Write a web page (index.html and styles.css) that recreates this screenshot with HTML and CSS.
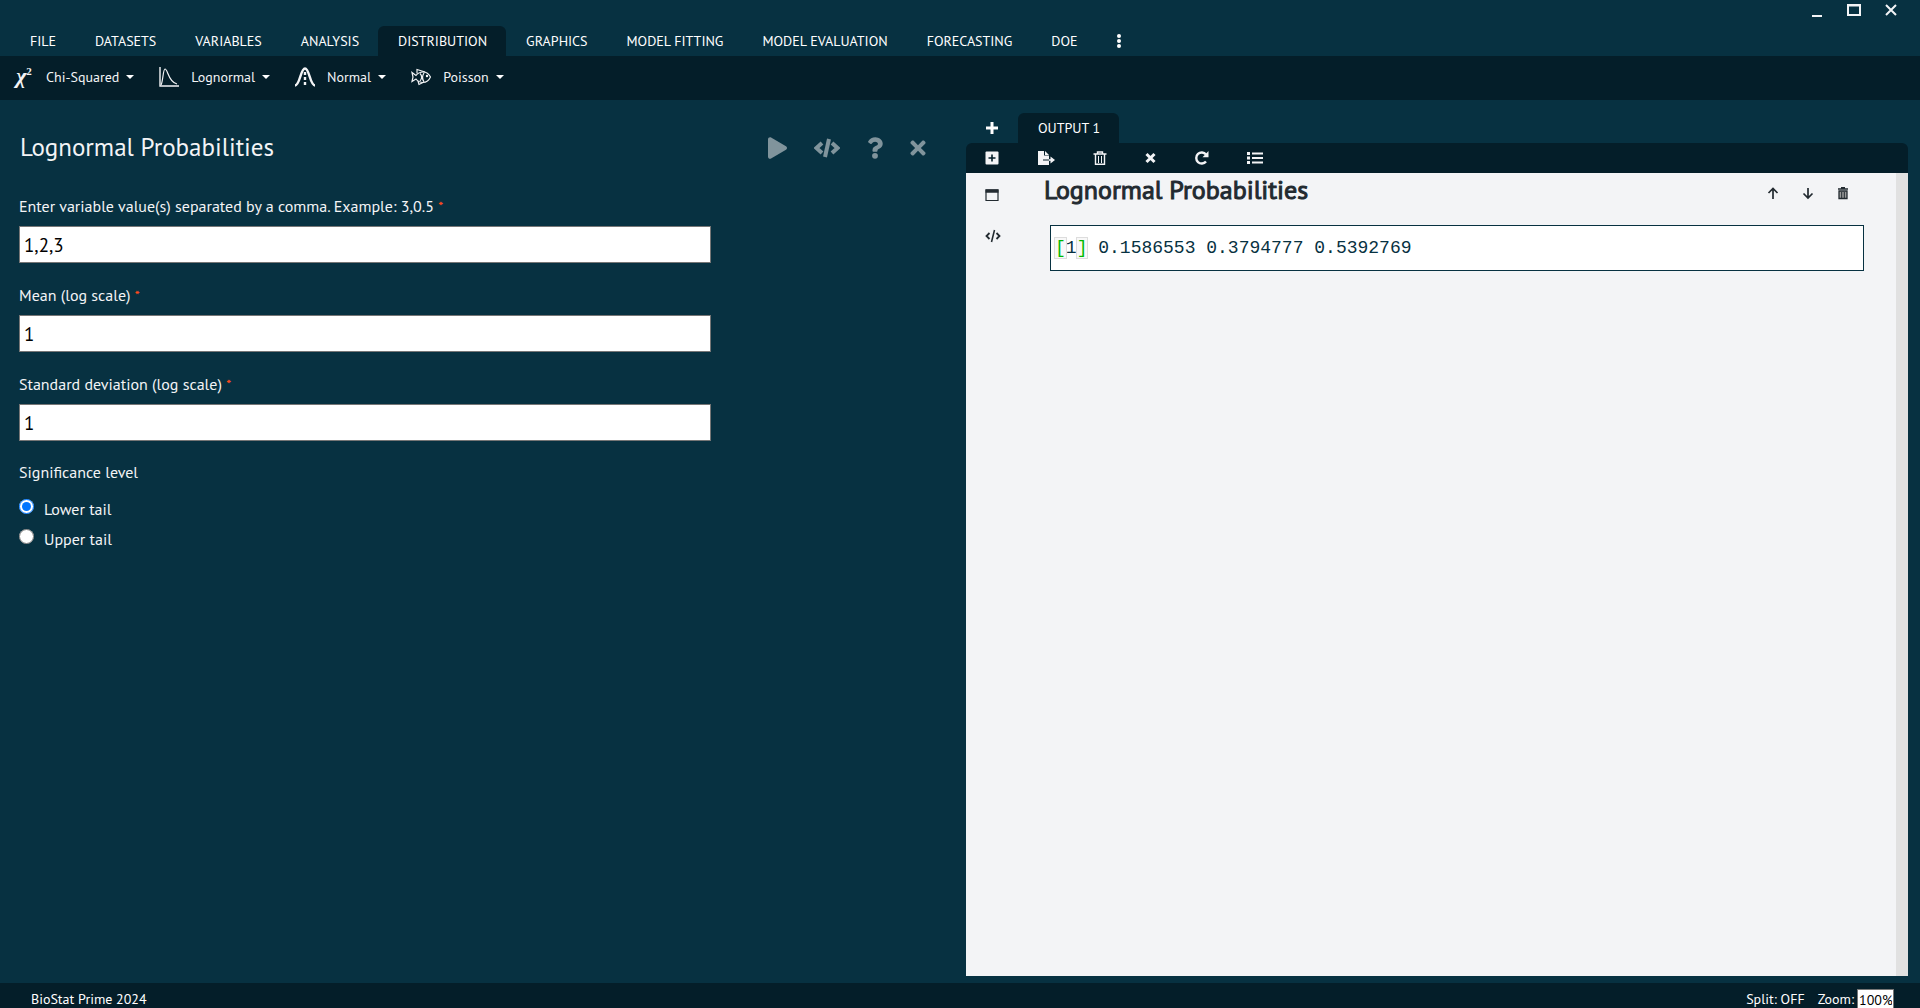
FILE: index.html
```html
<!DOCTYPE html>
<html lang="en">
<head>
    <meta charset="UTF-8">
    <meta name="viewport" content="width=device-width, initial-scale=1.0">
    <title>BioStat Prime 2024</title>
    <link rel="stylesheet" href="styles.css">
</head>
<body>

    <header>
        <div class="window-controls">
            <button type="button" aria-label="Minimize"><svg width="14" height="14" viewBox="0 0 14 14"><path d="M2 13h10" stroke-width="2"/></svg></button>
            <button type="button" aria-label="Maximize"><svg width="14" height="14" viewBox="0 0 14 14"><path d="M1 2h12v10H1z" stroke-width="2"/><path d="M1 2.5h12" stroke-width="2"/></svg></button>
            <button type="button" aria-label="Close"><svg width="14" height="14" viewBox="0 0 14 14"><path d="M2 2l10 10M12 2L2 12" stroke-width="2"/></svg></button>
        </div>
        <nav class="tabs">
            <button type="button" class="tab">FILE</button>
            <button type="button" class="tab">DATASETS</button>
            <button type="button" class="tab">VARIABLES</button>
            <button type="button" class="tab">ANALYSIS</button>
            <button type="button" class="tab active">DISTRIBUTION</button>
            <button type="button" class="tab">GRAPHICS</button>
            <button type="button" class="tab">MODEL FITTING</button>
            <button type="button" class="tab">MODEL EVALUATION</button>
            <button type="button" class="tab">FORECASTING</button>
            <button type="button" class="tab">DOE</button>
            <button type="button" class="tab" aria-label="More"><svg width="4" height="16" viewBox="0 0 4 16"><g fill="#fff" stroke="none"><circle cx="2" cy="3" r="2"/><circle cx="2" cy="8" r="2"/><circle cx="2" cy="13" r="2"/></g></svg></button>
        </nav>
    </header>

    <div class="ribbon">
        <button type="button" class="menu">
            <span class="chi" aria-hidden="true">χ<sup>2</sup></span>
            Chi-Squared <span class="caret"></span>
        </button>
        <button type="button" class="menu">
            <svg width="20" height="20" viewBox="0 0 20 20"><path d="M1 0v19h19" stroke-width="1.4"/><path d="M2 18C4 15 4 2 6 2c3 0 3 13 12 15" stroke-width="1.2"/></svg>
            Lognormal <span class="caret"></span>
        </button>
        <button type="button" class="menu">
            <svg width="20" height="20" viewBox="0 0 20 20"><path d="M0 18.500c5 0 5.500-17 10-17s5 17 10 17" stroke-width="2.400"/><path d="M10 5v15" stroke-width="2.400" stroke-dasharray="3 2"/></svg>
            Normal <span class="caret"></span>
        </button>
        <button type="button" class="menu">
            <svg width="20" height="20" viewBox="0 0 20 20" stroke-width="1.2"><path d="M5 8.500c2-2.500 4-3.500 7-3.500 4 0 6 2 7.500 5-1.500 3.500-4 5.500-7.500 5.500-3 0-5-1-7-3.500L1 14.500l1-4.500L1 5.500z"/><path d="M6 6.500V2.500l8 2.500M7 14l1 3.500 4-2M9 6.500c2 2 2 5 0 7.500M13 6c-2 3-2 6 0 9"/><circle cx="16" cy="9" r=".6"/></svg>
            Poisson <span class="caret"></span>
        </button>
    </div>

    <main>
        <section class="dialog">
            <div class="dialog-header">
                <h1>Lognormal Probabilities</h1>
                <div class="dialog-tools">
                    <button type="button" aria-label="Run"><svg width="19" height="22" viewBox="0 0 448 512"><path d="M424.4 214.7L72.4 6.6C43.8-10.3 0 6.1 0 47.9V464c0 37.500 40.700 60.100 72.400 41.300l352-208c31.400-18.500 31.500-64.100 0-82.600z"/></svg></button>
                    <button type="button" aria-label="Show code"><svg class="line" width="26" height="22" viewBox="0 0 26 22"><path d="M8 6l-5.500 5L8 16M18 6l5.500 5L18 16" stroke-width="4"/><path d="M15 2l-4 18" stroke-width="4"/></svg></button>
                    <button type="button" aria-label="Help"><svg width="16" height="22" viewBox="0 0 384 512"><path d="M202 0C122 0 70.500 32.700 30 91c-7.400 10.600-5 25 5 33l43 32.700c10.400 7.900 25 6 33.300-4.100 25-31.400 43.600-49.500 82.700-49.500 30.800 0 68.800 19.800 68.800 49.600 0 22.600-18.600 34.100-49 51.200-35.400 19.900-82.300 44.600-82.300 106.400V320c0 13.300 10.700 24 24 24H228c13.300 0 24-10.700 24-24v-5.800c0-42.900 125.300-44.600 125.300-160.600C377.500 66.300 286.900 0 202 0z"/><circle cx="192" cy="442.700" r="69.300"/></svg></button>
                    <button type="button" aria-label="Close dialog"><svg width="16" height="22" viewBox="0 0 352 512"><path d="M242.700 256l100-100c12.300-12.300 12.300-32.200 0-44.500l-22.200-22.300c-12.300-12.300-32.200-12.300-44.500 0L176 189.300 76 89.200c-12.300-12.300-32.200-12.300-44.500 0L9.200 111.500c-12.300 12.300-12.300 32.200 0 44.500l100 100-100 100c-12.300 12.300-12.300 32.200 0 44.500l22.300 22.300c12.300 12.300 32.200 12.300 44.500 0l100-100 100 100c12.300 12.300 32.200 12.300 44.500 0l22.300-22.300c12.300-12.300 12.300-32.200 0-44.500z"/></svg></button>
                </div>
            </div>

            <form>
                <label for="values">Enter variable value(s) separated by a comma. Example: 3,0.5 <span class="required">*</span></label>
                <input type="text" id="values" name="values" value="1,2,3" required>

                <label for="mean">Mean (log scale) <span class="required">*</span></label>
                <input type="text" id="mean" name="mean" value="1" required>

                <label for="sd">Standard deviation (log scale) <span class="required">*</span></label>
                <input type="text" id="sd" name="sd" value="1" required>

                <fieldset>
                    <legend>Significance level</legend>
                    <div class="radio-row">
                        <input type="radio" id="lower" name="tail" checked>
                        <label for="lower">Lower tail</label>
                    </div>
                    <div class="radio-row">
                        <input type="radio" id="upper" name="tail">
                        <label for="upper">Upper tail</label>
                    </div>
                </fieldset>
            </form>
        </section>

        <section class="output">
            <div class="output-tabs">
                <button type="button" class="add-tab" aria-label="Add output"><svg width="14" height="14" viewBox="0 0 14 14"><path d="M7 1v12M1 7h12" stroke-width="3"/></svg></button>
                <button type="button" class="tab active">OUTPUT 1</button>
            </div>
            <div class="output-toolbar">
                <button type="button" aria-label="Add"><svg width="14" height="14" viewBox="0 0 14 14"><rect x=".5" y=".5" width="13" height="13" rx="1" fill="#f3f4f6" stroke="none"/><path d="M7 3.500v7M3.500 7h7" stroke="#041e29" stroke-width="1.600"/></svg></button>
                <button type="button" aria-label="Export"><svg width="18" height="14" viewBox="0 0 18 14"><path d="M1 0h6v4.500h5V14H1z" fill="#f3f4f6" stroke="none"/><path d="M8 0l4 4H8z" fill="#f3f4f6" stroke="none"/><path d="M6 9h6" stroke="#041e29"/><path d="M12 9h3" stroke-width="1.600"/><path d="M13.500 5.500L18 9l-4.500 3.500z" fill="#f3f4f6" stroke="none"/></svg></button>
                <button type="button" aria-label="Delete"><svg width="14" height="14" viewBox="0 0 14 14"><path d="M.5 3h13M4.500 3V1h5v2M2.500 3v10.300h9V3" stroke-width="1.400"/><path d="M5.500 5v7M8.500 5v7"/></svg></button>
                <button type="button" aria-label="Clear"><svg width="11" height="14" viewBox="0 0 11 14"><path d="M1.500 3l8 8M9.500 3l-8 8" stroke-width="3"/></svg></button>
                <button type="button" aria-label="Refresh"><svg width="15" height="14" viewBox="0 0 15 14"><path d="M12 3.500A5.500 5.500 0 1 0 12 10.500" stroke-width="2.400"/><path d="M14.500 0v6.300H8.500z" fill="#f3f4f6" stroke="none"/></svg></button>
                <button type="button" aria-label="Contents"><svg width="16" height="14" viewBox="0 0 16 14"><path d="M0 2.500h3M0 7h3M0 11.500h3" stroke-width="3"/><path d="M5 2.500h11M5 7h11M5 11.500h11" stroke-width="2"/></svg></button>
            </div>
            <div class="output-body">
                <div class="gutter">
                    <button type="button" aria-label="Collapse"><svg width="14" height="14" viewBox="0 0 14 14"><path d="M1 2h12v10.500H1z" stroke-width="1.200"/><path d="M.5 3h13" stroke-width="3.500"/></svg></button>
                    <button type="button" aria-label="Show code"><svg width="16" height="14" viewBox="0 0 16 14"><path d="M4.500 4L1.500 7l3 3M11.500 4l3 3-3 3" stroke-width="1.800"/><path d="M9.500 1l-3 12" stroke-width="1.600"/></svg></button>
                </div>
                <article class="result">
                    <div class="result-header">
                        <h2>Lognormal Probabilities</h2>
                        <div class="result-tools">
                            <button type="button" aria-label="Move up"><svg width="12" height="14" viewBox="0 0 12 14"><path d="M6 13V3M1.500 7L6 2.500 10.500 7" stroke-width="1.700"/></svg></button>
                            <button type="button" aria-label="Move down"><svg width="12" height="14" viewBox="0 0 12 14"><path d="M6 2v10M1.500 7.500L6 12l4.500-4.500" stroke-width="1.700"/></svg></button>
                            <button type="button" aria-label="Delete result"><svg width="12" height="14" viewBox="0 0 12 14"><path d="M1 3h10M4 1.800h4" stroke-width="1.600"/><path d="M2 5h8v7.500H2z" fill="#999" stroke-width="1.300"/><path d="M4.700 6v6M7.300 6v6"/></svg></button>
                        </div>
                    </div>
                    <pre><span class="bracket">[</span>1<span class="bracket">]</span> 0.1586553 0.3794777 0.5392769</pre>
                </article>
            </div>
        </section>
    </main>

    <footer>
        <span class="product">BioStat Prime 2024</span>
        <span>Split: OFF</span>
        <label for="zoom">Zoom:</label>
        <input type="text" id="zoom" value="100%">
    </footer>

</body>
</html>
```
FILE: styles.css
```css
* {
    box-sizing: border-box;
}
body {
    display: flex;
    flex-direction: column;
    height: 100vh;
    margin: 0;
    overflow: hidden;
    font-family: "PT Sans", Lato, sans-serif;
    font-size: 16px;
    color: #f3f4f6;
    background-color: #073141;
}
button {
    display: flex;
    align-items: center;
    padding: 0;
    border: none;
    background: none;
    color: inherit;
    font-family: inherit;
    cursor: pointer;
}
svg {
    display: block;
    fill: none;
    stroke: currentColor;
}
input {
    font-family: inherit;
}

/* Header */
.window-controls {
    display: flex;
    justify-content: flex-end;
    align-items: flex-start;
    gap: 23px;
    height: 26px;
    padding: 3px 22px 0 0;
}
.tabs {
    display: flex;
    padding: 0 10px;
}
.tab {
    height: 30px;
    padding: 0 19px 0 20px;
    font-size: 14px;
    color: white;
    border-radius: 6px 6px 0 0;
}
.tab.active {
    background-color: #041e29;
}
.ribbon {
    display: flex;
    gap: 25px;
    height: 44px;
    padding: 0 15px 2px;
    background-color: #041e29;
}
.menu {
    font-size: 14px;
}
.menu svg {
    margin-right: 12px;
}
.chi {
    width: 18px;
    margin-right: 13px;
    padding-bottom: 2px;
    font: italic bold 22px/20px "Liberation Serif", serif;
    white-space: nowrap;
}
.chi sup {
    font-size: 11px;
    font-style: normal;
    line-height: 0;
}
.caret {
    margin-left: 7px;
    border: 4px solid transparent;
    border-top-color: white;
    border-bottom: none;
}

/* Analysis dialog */
main {
    display: grid;
    grid-template-columns: minmax(0, 966fr) minmax(0, 942fr);
    flex: 1;
    min-height: 0;
    padding: 13px 12px 7px 0;
}
.dialog {
    padding: 19px 40px 0 19px;
}
.dialog-header {
    display: flex;
    justify-content: space-between;
    align-items: center;
    height: 32px;
}
h1, h2 {
    margin: 0;
    font-weight: normal;
}
h1 {
    padding: 0 0 2px 1px;
    font-size: 25px;
}
.dialog-tools {
    display: flex;
    gap: 27px;
    color: #80949c;
}
.dialog-tools svg {
    fill: currentColor;
    stroke: none;
}
.dialog-tools svg.line {
    fill: none;
    stroke: currentColor;
}
form {
    margin-right: 215px;
    padding-top: 32px;
}
form label, legend {
    display: block;
    height: 20px;
    padding: 0;
    line-height: 20px;
}
.required {
    color: #ff4a1c;
    font-size: 14px;
    vertical-align: top;
}
form input[type="text"] {
    display: block;
    width: 100%;
    height: 37px;
    margin: 10px 0 22px;
    padding: 0 4px;
    border: 1px solid #767676;
    font-size: 19px;
    color: black;
}
fieldset {
    margin: 0;
    padding: 0;
    border: none;
}
legend {
    margin-bottom: 14px;
    line-height: 18px;
}
.radio-row {
    display: flex;
    gap: 10px;
    height: 30px;
}
.radio-row input {
    width: 15px;
    height: 15px;
    margin: 2px 0;
}
.radio-row label {
    padding-top: 2px;
}

/* Output panel */
.output {
    display: flex;
    flex-direction: column;
}
.output-tabs {
    display: flex;
    gap: 19px;
    padding-left: 19px;
}
.add-tab {
    color: white;
}
.output-toolbar {
    display: flex;
    gap: 38px;
    height: 30px;
    padding: 0 19px;
    background-color: #041e29;
    border-radius: 6px 6px 0 0;
}
.output-body {
    display: flex;
    flex: 1;
    padding-right: 32px;
    color: #222a30;
    background-color: #f3f4f6;
    border-right: 12px solid #e1e1e1;
}
.gutter {
    display: flex;
    flex-direction: column;
    gap: 27px;
    width: 78px;
    padding: 15px 19px;
}
.result {
    flex: 1;
}
.result-header {
    display: flex;
    justify-content: space-between;
    height: 40px;
}
h2 {
    font-size: 26px;
    font-weight: 500;
    line-height: 34px;
    -webkit-text-stroke: 1px;
}
.result-tools {
    display: flex;
    gap: 23px;
    padding-right: 15px;
}
pre {
    height: 46px;
    margin: 12px 0 0 6px;
    padding: 0 4px;
    border: 1px solid #073141;
    background-color: white;
    color: #073141;
    font-family: "Liberation Mono", monospace;
    font-size: 18px;
    line-height: 44px;
}
.bracket {
    outline: 1px solid #ddd;
    background-color: #f8f8f8;
    color: #00b800;
}

/* Status bar */
footer {
    display: flex;
    align-items: flex-start;
    height: 25px;
    padding: 6px 26px 0 31px;
    background-color: #041e29;
    font-size: 14px;
    line-height: 20px;
    color: white;
}
.product {
    flex: 1;
}
footer label {
    margin: 0 3px 0 13px;
}
footer input {
    width: 37px;
    height: 22px;
    padding: 0 1px;
    border: 1px solid #767676;
    font-size: 14px;
}
```
